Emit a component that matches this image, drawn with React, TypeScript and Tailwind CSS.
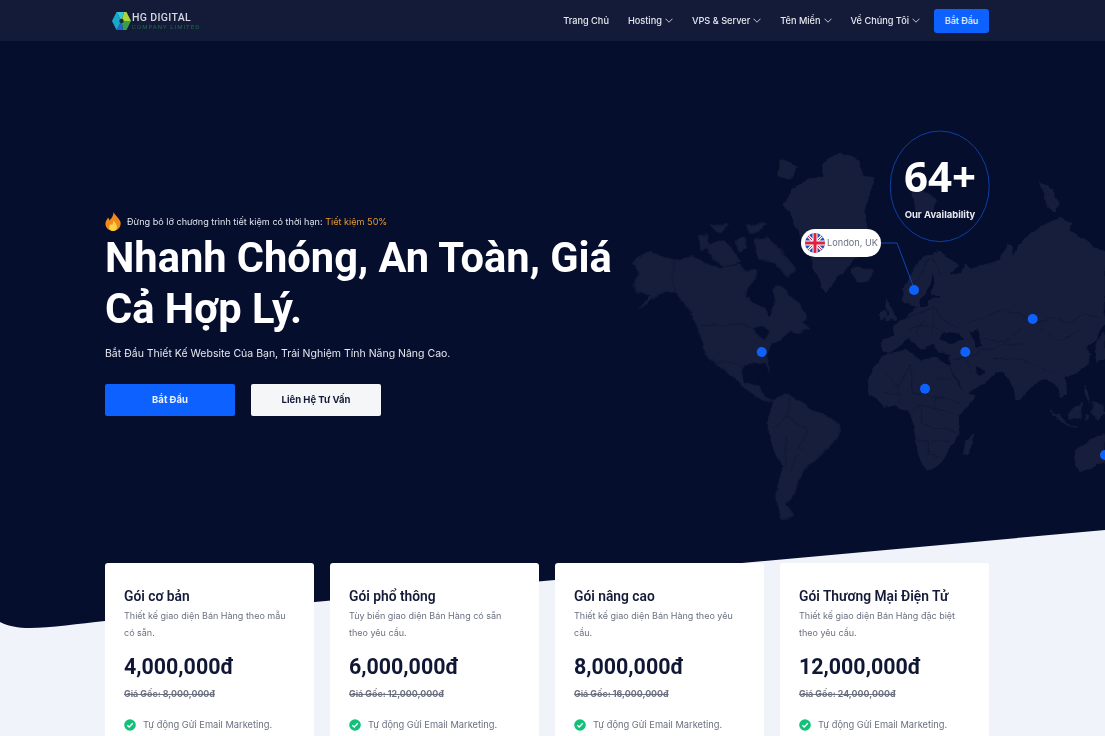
const navItems = [
  { label: "Trang Chủ", hasMenu: false },
  { label: "Hosting", hasMenu: true },
  { label: "VPS & Server", hasMenu: true },
  { label: "Tên Miền", hasMenu: true },
  { label: "Về Chúng Tôi", hasMenu: true },
];

const plans = [
  {
    name: "Gói cơ bản",
    desc: "Thiết kế giao diện Bán Hàng theo mẫu có sẵn.",
    price: "4,000,000đ",
    oldPrice: "Giá Gốc: 8,000,000đ",
  },
  {
    name: "Gói phổ thông",
    desc: "Tùy biến giao diện Bán Hàng có sẵn theo yêu cầu.",
    price: "6,000,000đ",
    oldPrice: "Giá Gốc: 12,000,000đ",
  },
  {
    name: "Gói nâng cao",
    desc: "Thiết kế giao diện Bán Hàng theo yêu cầu.",
    price: "8,000,000đ",
    oldPrice: "Giá Gốc: 16,000,000đ",
  },
  {
    name: "Gói Thương Mại Điện Tử",
    desc: "Thiết kế giao diện Bán Hàng đặc biệt theo yêu cầu.",
    price: "12,000,000đ",
    oldPrice: "Giá Gốc: 24,000,000đ",
  },
];

const LAND = "#161e3b";
const SEA = "#060e2e";
const BORDER = "#0e1634";

// each group is traced at 3x, so it gets its own offset and scale in the svg
const americas =
  "M25 110 L70 80 L110 92 L145 105 L205 95 L240 115 L290 125 L340 118 L360 140 L395 135 L395 160 L370 185 L365 215 L385 235 L420 250 L432 280 L445 240 L450 215 L440 190 L462 185 L490 200 L520 235 L548 270 L530 290 L555 312 L520 322 L500 310 L470 340 L440 355 L425 385 L432 440 L420 415 L395 420 L360 425 L350 445 L360 470 L387 477 L403 483 L425 520 L447 527 L417 527 L370 497 L330 467 L297 433 L270 410 L237 377 L225 320 L200 270 L180 240 L150 205 L105 200 L85 225 L40 255 L80 215 L35 200 L25 170 L45 145 Z " +
  "M390 45 L430 40 L470 80 L515 140 L490 155 L450 115 L400 100 Z M250 55 L300 50 L325 80 L345 110 L300 120 L250 90 Z M220 30 L255 30 L250 70 L230 80 Z M255 0 L310 -5 L280 25 Z M330 45 L355 35 L365 65 L345 80 Z M365 0 L430 -5 L400 25 L375 25 Z " +
  // south america
  "M447 525 L473 513 L500 517 L537 540 L575 560 L615 580 L645 597 L637 627 L620 660 L585 687 L555 715 L535 745 L515 775 L500 815 L483 835 L503 877 L477 881 L460 860 L455 815 L465 765 L470 725 L450 675 L430 625 L429 585 Z";

const americaSeas =
  "M370 190 L405 165 L440 190 L450 230 L432 278 L420 248 L385 232 L365 215 Z M385 310 L410 305 L435 320 L420 340 L395 330 Z M350 430 L395 420 L420 440 L395 480 L360 470 Z";

const americaBorders =
  "M145 105 L147 205 M225 298 L345 298 L390 312 M270 410 L320 415 L355 433 M495 520 L485 575 L445 605 M485 575 L545 615 L525 665 L555 695 M485 635 L480 735 M520 685 L495 745";

const greenland =
  "M823 163 L840 153 L860 160 L862 175 L875 178 L870 195 L865 207 L866 230 L857 258 L848 268 L840 275 L826 293 L815 275 L812 255 L803 240 L785 205 L790 190 L808 180 L823 175 Z M780 160 L797 167 L790 178 L780 175 Z M851 270 L858 266 L873 271 L868 279 L856 281 Z M913 193 L925 190 L936 200 L930 213 L916 210 Z M1040 183 L1047 186 L1060 204 L1056 212 L1045 200 Z";

const eurasia =
  "M50 380 L50 340 L90 335 L85 300 L120 280 L135 265 L155 250 L115 225 L115 190 L150 130 L190 90 L225 82 L280 120 L255 145 L285 150 L300 120 L320 130 L360 120 L405 105 L420 55 L435 60 L440 100 L450 75 L500 25 L530 5 L585 -24 L624 -6 L610 15 L640 30 L720 84 L720 290 L690 350 L665 365 L680 385 L660 420 L640 445 L600 455 L605 505 L590 515 L570 475 L530 465 L500 480 L470 525 L457 528 L435 465 L420 445 L395 440 L370 460 L360 470 L310 505 L290 490 L255 420 L250 385 L215 385 L200 355 L160 370 L135 340 L100 365 L75 385 Z " +
  "M65 225 L80 255 L95 285 L60 290 L72 265 L62 245 Z M45 265 L60 255 L65 275 L48 285 Z M693 351 L720 320 L720 400 L695 410 Z";

const eurasiaSeas =
  "M225 340 L240 322 L285 328 L295 345 L255 352 Z M315 320 L335 315 L350 365 L330 365 L325 340 Z M205 150 L195 190 L165 215 L165 245 L190 245 L190 225 L225 215 L195 213 L210 175 Z M330 425 L360 440 L345 445 Z";

const eurasiaBorders =
  "M315 295 L375 270 L420 250 L470 275 L520 290 L560 280 L610 295 L660 265 L700 280 M520 310 L580 345 L650 315 M350 335 L420 355 L470 310 M300 400 L350 375 L420 360 L480 360 M430 400 L490 410 L530 430 L560 440 M120 280 L170 260 L210 250 L240 290 L280 310 M130 310 L200 300 L250 330 M155 330 L175 280 M210 250 L200 330 M225 150 L200 100 M115 200 L170 140 L200 95 M260 400 L300 400 L320 440 M390 400 L430 400";

const southern =
  "M15 -15 L50 -70 L120 -90 L170 -60 L215 -65 L250 -50 L270 0 L285 25 L330 50 L300 85 L280 110 L282 160 L255 195 L250 220 L225 250 L185 272 L170 240 L150 180 L150 140 L135 95 L100 75 L55 78 L15 40 L10 0 Z " +
  "M325 165 L322 190 L308 225 L297 218 L303 180 Z M630 215 L680 180 L720 160 L720 250 L680 262 L645 275 L635 250 Z M555 85 L590 130 L610 135 L575 105 Z M610 100 L650 70 L645 110 L615 118 Z M595 130 L640 142 L600 135 Z M660 105 L672 110 L665 125 Z M660 15 L670 35 L680 70 L665 45 Z M690 60 L720 100 L700 120 L680 100 Z";

const southernBorders =
  "M60 -20 L100 20 L140 -50 M140 -50 L140 40 L215 50 L285 70 M100 20 L105 70 M60 40 L100 45 M140 95 L165 75 L220 80 L280 110 M165 75 L170 135 L230 145 L280 160 M150 180 L205 185 L250 180 M190 185 L190 225 L235 235 M215 50 L210 80 L235 110 M270 0 L215 0";

function WorldMap() {
  return (
    <svg
      className="absolute left-0 top-0"
      width="1105"
      height="736"
      viewBox="0 0 1105 736"
      aria-hidden="true">
      <defs>
        {/* roughens the straight traced edges into something like a coastline */}
        <filter
          id="coast"
          filterUnits="userSpaceOnUse"
          x="600"
          y="100"
          width="505"
          height="450"
          colorInterpolationFilters="sRGB">
          <feTurbulence type="fractalNoise" baseFrequency="0.07" numOctaves="3" seed="7" />
          <feDisplacementMap in="SourceGraphic" scale="7" xChannelSelector="R" yChannelSelector="G" />
        </filter>
      </defs>
      <g filter="url(#coast)">
        <path d={greenland} fill={LAND} stroke={LAND} strokeWidth="1" strokeLinejoin="round" />
        <g transform="translate(625 225) scale(0.3333)">
          <path d={americas} fill={LAND} stroke={LAND} strokeWidth="3" strokeLinejoin="round" />
          <path d={americaSeas} fill={SEA} stroke={SEA} strokeWidth="3" strokeLinejoin="round" />
          <path d={americaBorders} fill="none" stroke={BORDER} strokeWidth="2.400" />
        </g>
        <g transform="translate(865 225) scale(0.3333)">
          <path d={eurasia} fill={LAND} stroke={LAND} strokeWidth="3" strokeLinejoin="round" />
          <path d={eurasiaSeas} fill={SEA} stroke={SEA} strokeWidth="3" strokeLinejoin="round" />
          <path d={eurasiaBorders} fill="none" stroke={BORDER} strokeWidth="2.400" />
        </g>
        <g transform="translate(865 380) scale(0.3333)">
          <path d={southern} fill={LAND} stroke={LAND} strokeWidth="3" strokeLinejoin="round" />
          <path d={southernBorders} fill="none" stroke={BORDER} strokeWidth="2.400" />
        </g>
      </g>
      <path d="M881 243 H897 L914 288" fill="none" stroke="#0d47b0" strokeWidth="1" />
      <ellipse cx="939.700" cy="186.300" rx="49.500" ry="55.300" fill="none" stroke="#0d3fa3" strokeWidth="1" />
      {[
        [914, 290],
        [761.7, 352],
        [1032.7, 319],
        [965.3, 352],
        [925, 388.7],
        [1105, 455],
      ].map(([cx, cy]) => (
        <circle key={cx} cx={cx} cy={cy} r="5" fill="#0d62ff" />
      ))}
    </svg>
  );
}

function Logo() {
  return (
    <div className="flex items-center">
      <svg width="21" height="20" viewBox="0 0 21 20">
        <path d="M5.5 1 H13 L10.500 10 Z" fill="#35c6d8" />
        <path d="M13 1 H15.500 L20 10 H10.500 Z" fill="#a8d63c" />
        <path d="M10.500 10 H20 L15.500 19 H12 Z" fill="#3a9c4c" />
        <path d="M10.500 10 L12 19 H5.500 Z" fill="#1c64d8" />
        <path d="M1 10 L5.500 1 L10.500 10 L5.500 19 Z" fill="#1ba7c9" />
        <circle cx="10.500" cy="10" r="2.200" fill="#10312e" />
      </svg>
      <div className="mt-[1px] flex flex-col">
        <span className="font-['Roboto',sans-serif] text-[10.500px] font-medium leading-[11px] tracking-[0.35px] text-[#d5d8e0]">
          HG DIGITAL
        </span>
        <span className="font-['Roboto',sans-serif] text-[6px] leading-[7px] tracking-[1.050px] text-[#1d6a4c]">
          COMPANY LIMITED
        </span>
      </div>
    </div>
  );
}

function Flame() {
  return (
    <svg width="16" height="19" viewBox="0 0 16 19">
      <path
        d="M8.500 0 C9.500 3 14 5.500 15.500 10 C16.500 15 12.500 19 8 19 C3.500 19 0 15.500 0.500 11 C0.800 8.500 2.500 7 3 5.500 C4 6.500 4.300 7.500 4.500 8.500 C6.500 6.500 8.800 3.500 8.500 0 Z"
        fill="#f08a1c"
      />
      <path
        d="M8.500 8 C9 10 12 12 12 15 C12 17.300 10 19 8 19 C5.800 19 4 17.300 4.200 15 C4.300 13.500 5.300 12.800 5.800 11.800 C6.300 12.300 6.500 12.800 6.700 13.200 C7.800 12 8.800 10 8.500 8 Z"
        fill="#fdd247"
      />
    </svg>
  );
}

function UkFlag() {
  return (
    <svg width="20" height="20" viewBox="0 0 20 20" className="shrink-0">
      <clipPath id="flag-clip">
        <circle cx="10" cy="10" r="10" />
      </clipPath>
      <g clipPath="url(#flag-clip)">
        <rect width="20" height="20" fill="#2450b4" />
        <path d="M0 0 L20 20 M20 0 L0 20" stroke="#fff" strokeWidth="3" />
        <path d="M0 0 L20 20 M20 0 L0 20" stroke="#e0203c" strokeWidth="1" />
        <path d="M10 0 V20 M0 10 H20" stroke="#fff" strokeWidth="5" />
        <path d="M10 0 V20 M0 10 H20" stroke="#e0203c" strokeWidth="3" />
      </g>
    </svg>
  );
}

function CheckBadge() {
  return (
    <svg width="12" height="12" viewBox="0 0 12 12" className="shrink-0">
      <circle cx="6" cy="6" r="5.800" fill="#13c07a" />
      <path d="M3.300 6.200 L5.200 8 L8.800 4.300" fill="none" stroke="#fff" strokeWidth="1.400" />
    </svg>
  );
}

function NavChevron() {
  return (
    <svg width="8" height="5" viewBox="0 0 8 5" className="ml-[3px] mt-[1px]">
      <path d="M0.500 0.700 L4 4.200 L7.500 0.700" fill="none" stroke="#d5d8e0" strokeWidth="0.900" />
    </svg>
  );
}

export default function App() {
  return (
    <div className="relative h-[736px] w-full overflow-hidden bg-[#060e2e] font-['Inter',sans-serif]">
      <WorldMap />

      {/* white wave under the hero */}
      <svg
        className="absolute left-0 top-0"
        width="1105"
        height="736"
        viewBox="0 0 1105 736"
        aria-hidden="true">
        <path
          d="M0 622 C8 626 18 628 30 628 C50 628 80 623.500 105 621 L1105 530 V736 H0 Z"
          fill="#f0f3f9"
        />
      </svg>

      {/* availability + pill on the map */}
      <div className="absolute left-[890px] top-[137px] flex h-[100px] w-[100px] flex-col items-center">
        <span className="font-['Open_Sans',sans-serif] text-[42px] font-bold leading-[78px] text-white">
          64+
        </span>
        <span className="mt-[-6px] text-[9.500px] font-bold leading-[12px] text-[#e8eaf0]">
          Our Availability
        </span>
      </div>
      <div className="absolute left-[801px] top-[229px] flex h-[28px] w-[80px] items-center gap-[2px] rounded-full bg-white pl-[4px]">
        <UkFlag />
        <span className="whitespace-nowrap text-[9.200px] text-[#6b7080]">London, UK</span>
      </div>

      <header className="relative flex h-[41px] items-center justify-between bg-[#141b39] pl-[111px] pr-[116px]">
        <Logo />
        <nav className="flex items-center">
          <div className="mr-[14px] flex items-center gap-[19px]">
            {navItems.map((item) => (
              <a key={item.label} className="flex items-center text-[9.200px] font-medium text-[#e6e8ee]">
                {item.label}
                {item.hasMenu && <NavChevron />}
              </a>
            ))}
          </div>
          <button className="h-[24px] w-[55px] rounded-[3px] bg-[#0d62ff] text-[9px] font-medium text-[#eef2ff]">
            Bắt Đầu
          </button>
        </nav>
      </header>

      <main className="relative ml-[105px] w-[884px] pt-[170px]">
        <div className="flex h-[20px] items-center gap-[6px]">
          <Flame />
          <p className="mt-[1px] text-[9.100px] font-normal text-[#dfe2ea]">
            Đừng bỏ lỡ chương trình tiết kiệm có thời hạn:{" "}
            <span className="text-[#e59a2f]">Tiết kiệm 50%</span>
          </p>
        </div>
        <h1 className="mt-[1px] w-[540px] font-['Roboto',sans-serif] text-[41.600px] font-bold leading-[51px] text-white">
          Nhanh Chóng, An Toàn, Giá Cả Hợp Lý.
        </h1>
        <p className="mt-[12px] text-[10.500px] leading-[16px] text-[#e6e8ee]">
          Bắt Đầu Thiết Kế Website Của Bạn, Trải Nghiệm Tính Năng Nâng Cao.
        </p>
        <div className="mt-[22px] flex gap-[16px]">
          <button className="h-[32px] w-[130px] rounded-[2px] bg-[#0d62ff] text-[9.500px] font-bold text-[#eef2ff]">
            Bắt Đầu
          </button>
          <button className="h-[32px] w-[130px] rounded-[2px] bg-[#f5f6f8] text-[9.500px] font-bold text-[#141b39]">
            Liên Hệ Tư Vấn
          </button>
        </div>

        <section className="mt-[147px] grid grid-cols-4 gap-[16px]">
          {plans.map((plan) => (
            <article key={plan.name} className="h-[220px] rounded-[3px] bg-white px-[19px] pt-[24px]">
              <h3 className="font-['Roboto',sans-serif] text-[13.800px] font-semibold leading-[18px] text-[#141b39]">
                {plan.name}
              </h3>
              <p className="mt-[2px] text-[9px] leading-[17px] text-[#6b7080]">{plan.desc}</p>
              <div className="mt-[12px] font-['Roboto',sans-serif] text-[21.400px] font-bold leading-[28px] text-[#101735]">
                {plan.price}
              </div>
              <div className="mt-[6px] text-[8.900px] font-bold leading-[14px] text-[#6b7080] line-through">
                {plan.oldPrice}
              </div>
              <div className="mt-[17px] flex items-center gap-[7px]">
                <CheckBadge />
                <span className="text-[9.300px] leading-[14px] text-[#6b7080]">
                  Tự động Gửi Email Marketing.
                </span>
              </div>
            </article>
          ))}
        </section>
      </main>
    </div>
  );
}
